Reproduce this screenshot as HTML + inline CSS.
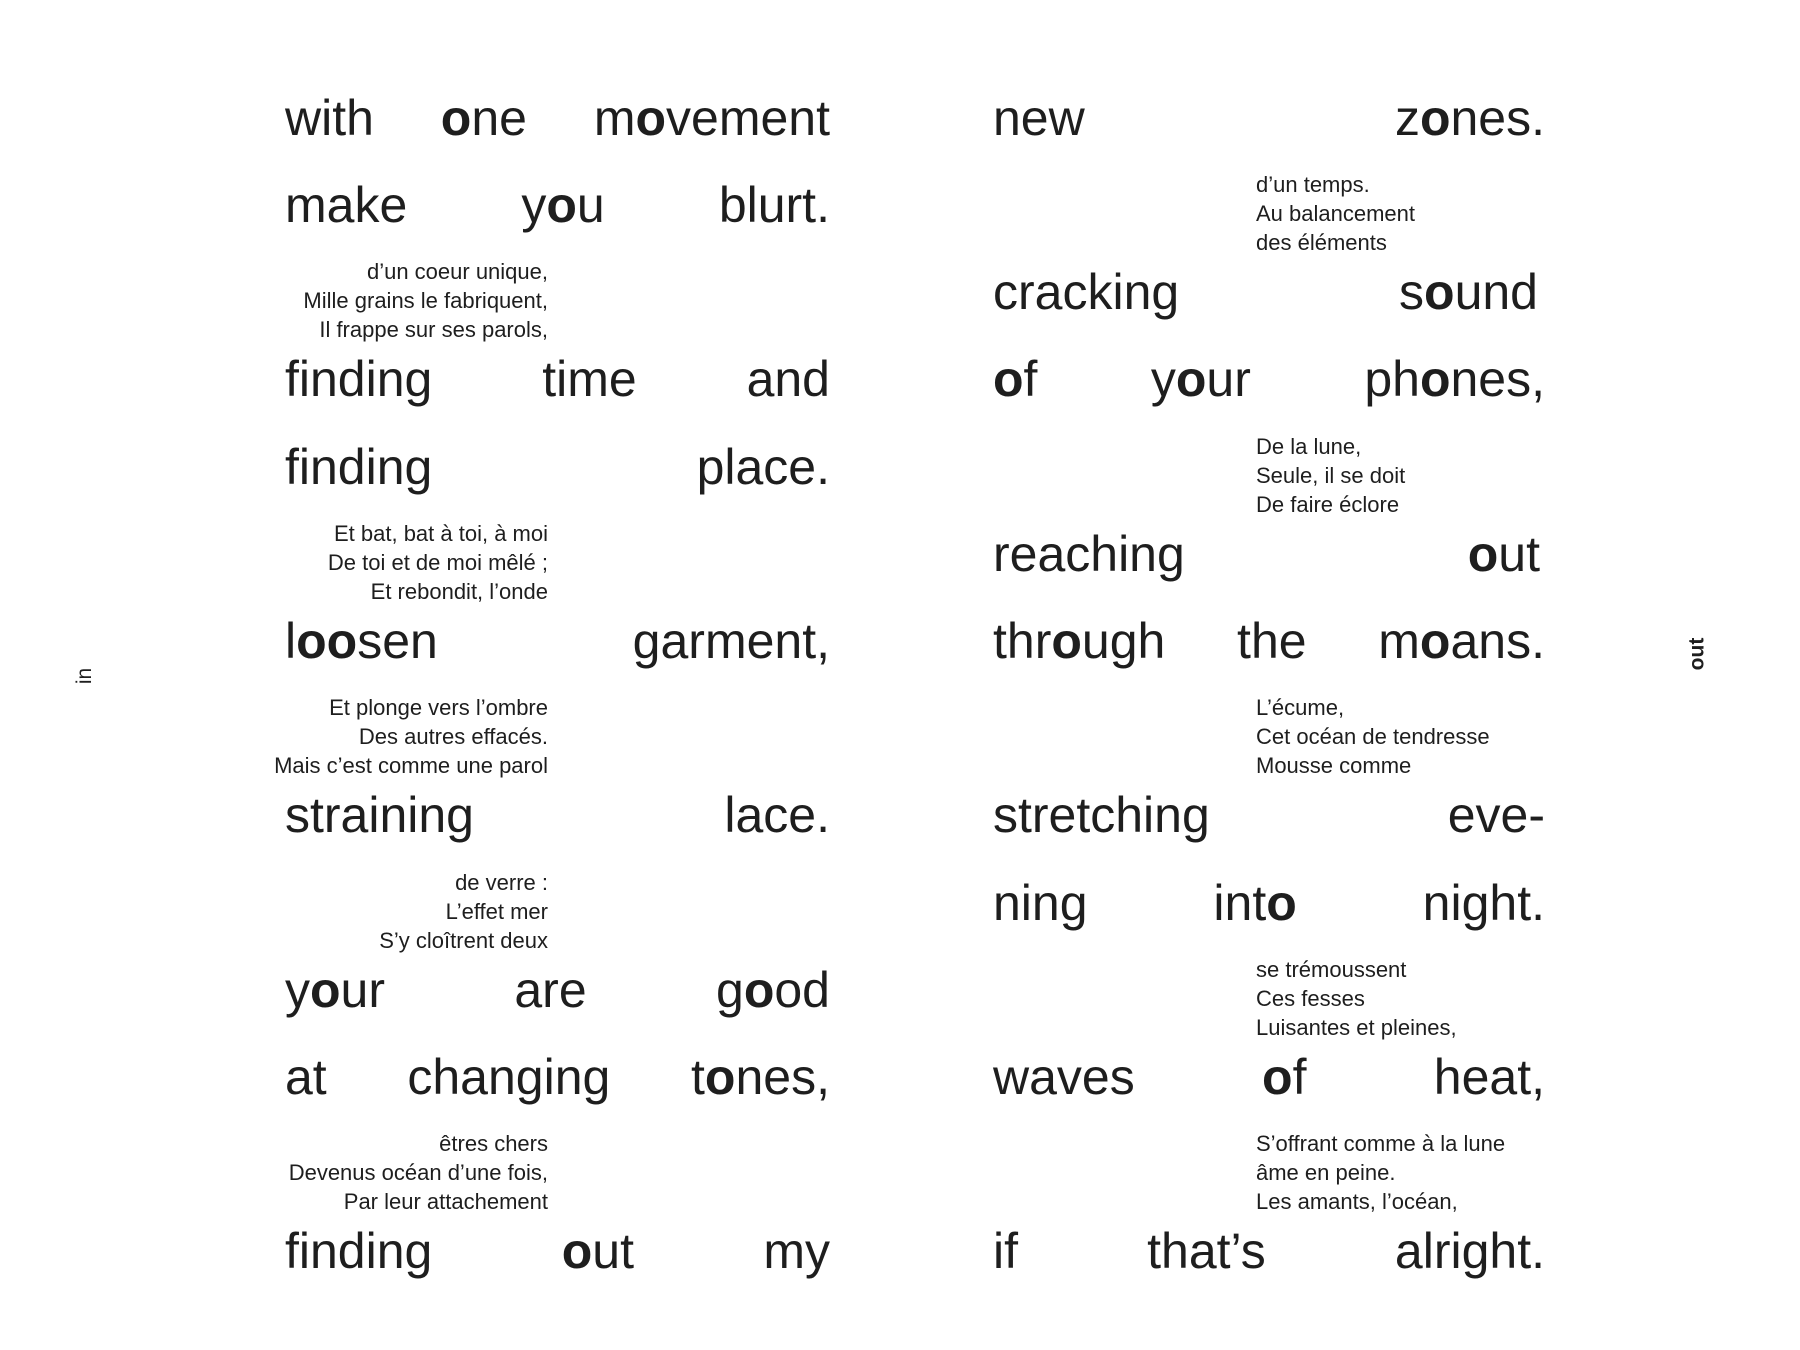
<!DOCTYPE html>
<html><head><meta charset="utf-8"><style>
html,body{margin:0;padding:0;background:#fff;}
body{width:1800px;height:1350px;position:relative;overflow:hidden;color:#1e1e1e;font-family:"Liberation Sans",sans-serif;}
.b{position:absolute;height:50px;line-height:50px;font-size:50px;display:flex;justify-content:space-between;white-space:nowrap;}
.L{left:285px;width:545px;}
.R{left:993px;width:552px;}
.b b{font-weight:bold;}
.s{position:absolute;font-family:"Liberation Sans Narrow","Liberation Sans",sans-serif;font-size:22px;line-height:29px;white-space:nowrap;}
.sl{right:1252px;text-align:right;}
.sr{left:1256px;text-align:left;}
.rot{position:absolute;font-size:21px;transform:rotate(-90deg);transform-origin:center;}
</style></head><body>
<div class="rot" style="left:77px;top:664px;">in</div>
<div class="rot" style="left:1681px;top:642px;font-weight:bold;">out</div>

<div class="b L" style="top:93px"><span>with</span><span><b>o</b>ne</span><span>m<b>o</b>vement</span></div>
<div class="b L" style="top:180px"><span>make</span><span>y<b>o</b>u</span><span>blurt.</span></div>
<div class="s sl" style="top:257px">d’un coeur unique,<br>Mille grains le fabriquent,<br>Il frappe sur ses parols,</div>
<div class="b L" style="top:354px"><span>finding</span><span>time</span><span>and</span></div>
<div class="b L" style="top:442px"><span>finding</span><span>place.</span></div>
<div class="s sl" style="top:519px">Et bat, bat à toi, à moi<br>De toi et de moi mêlé ;<br>Et rebondit, l’onde</div>
<div class="b L" style="top:616px"><span>l<b>oo</b>sen</span><span>garment,</span></div>
<div class="s sl" style="top:693px">Et plonge vers l’ombre<br>Des autres effacés.<br>Mais c’est comme une parol</div>
<div class="b L" style="top:790px"><span>straining</span><span>lace.</span></div>
<div class="s sl" style="top:868px">de verre :<br>L’effet mer<br>S’y cloîtrent deux</div>
<div class="b L" style="top:965px"><span>y<b>o</b>ur</span><span>are</span><span>g<b>o</b>od</span></div>
<div class="b L" style="top:1052px"><span>at</span><span>changing</span><span>t<b>o</b>nes,</span></div>
<div class="s sl" style="top:1129px">êtres chers<br>Devenus océan d’une fois,<br>Par leur attachement</div>
<div class="b L" style="top:1226px"><span>finding</span><span><b>o</b>ut</span><span>my</span></div>

<div class="b R" style="top:93px"><span>new</span><span>z<b>o</b>nes.</span></div>
<div class="s sr" style="top:170px">d’un temps.<br>Au balancement<br>des éléments</div>
<div class="b R" style="top:267px;width:545px"><span>cracking</span><span>s<b>o</b>und</span></div>
<div class="b R" style="top:354px"><span><b>o</b>f</span><span>y<b>o</b>ur</span><span>ph<b>o</b>nes,</span></div>
<div class="s sr" style="top:432px">De la lune,<br>Seule, il se doit<br>De faire éclore</div>
<div class="b R" style="top:529px;width:547px"><span>reaching</span><span><b>o</b>ut</span></div>
<div class="b R" style="top:616px"><span>thr<b>o</b>ugh</span><span>the</span><span>m<b>o</b>ans.</span></div>
<div class="s sr" style="top:693px">L’écume,<br>Cet océan de tendresse<br>Mousse comme</div>
<div class="b R" style="top:790px"><span>stretching</span><span>eve-</span></div>
<div class="b R" style="top:878px"><span>ning</span><span>int<b>o</b></span><span>night.</span></div>
<div class="s sr" style="top:955px">se trémoussent<br>Ces fesses<br>Luisantes et pleines,</div>
<div class="b R" style="top:1052px"><span>waves</span><span><b>o</b>f</span><span>heat,</span></div>
<div class="s sr" style="top:1129px">S’offrant comme à la lune<br>âme en peine.<br>Les amants, l’océan,</div>
<div class="b R" style="top:1226px"><span>if</span><span>that’s</span><span>alright.</span></div>
</body></html>
